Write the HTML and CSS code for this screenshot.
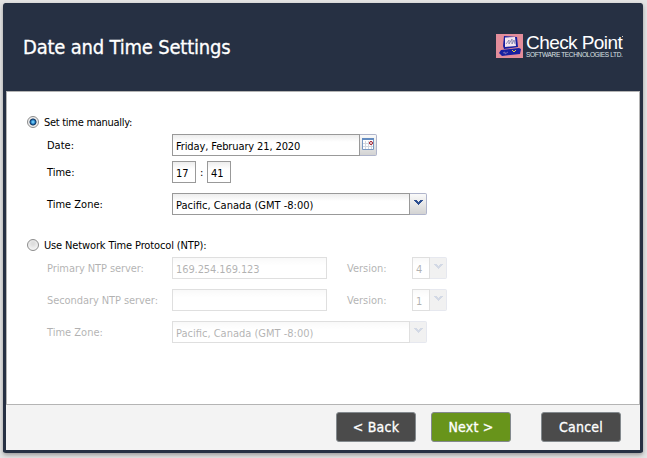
FILE: index.html
```html
<!DOCTYPE html>
<html lang="en">
<head>
<meta charset="utf-8">
<title>Date and Time Settings</title>
<link rel="stylesheet" href="styles.css">
</head>
<body>
<svg width="0" height="0" class="defs">
  <symbol id="arrow" viewBox="0 0 9 6"><path d="M0 0h3v1h1v1h1V1h1V0h3v1H8v1H7v1H6v1H5v1H4V4H3V3H2V2H1V1H0z"/></symbol>
</svg>
<div class="window">
  <header class="header">
    <h1>Date and Time Settings</h1>
    <div class="brand">
      <svg class="logo" viewBox="0 0 27 24">
        <path fill="#e38d9b" d="M0 0h27v24H0z"/>
        <path fill="#1720a0" d="M8 2l13 1 1 10-14 2-1-3z"/>
        <path fill="#f4e5ef" d="M9 3.5l10-.5 1 9-11 1z"/>
        <path fill="none" stroke="#7376a8" stroke-width=".8" d="M10 10l3-4v4l3-5v5l2-4 1 4"/>
        <path fill="#1720a0" d="M5 16l18-2 2 1-1 5-18 2-3-3z"/>
        <path fill="none" stroke="#8d78b8" stroke-width=".8" d="M7 19l2-1v2l3-2"/>
        <path fill="none" stroke="#e5ce42" d="M16 16l2 2 2-2"/>
      </svg>
      <div class="wordmark">
        <div class="name">Check Point<span class="mark"></span></div>
        <div class="tagline">SOFTWARE TECHNOLOGIES LTD.</div>
      </div>
    </div>
  </header>
  <main class="content">
    <div class="row choice"><span class="radio on"></span><span class="t-set">Set time manually:</span></div>
    <div class="row date"><label>Date:</label><div class="input w-date t-date">Friday, February 21, 2020</div><div class="trigger">
      <svg class="calendar" viewBox="0 0 13 13"><path fill="#fff" stroke="#7898c2" d="M.5 1.5h11v10H.5z"/><path fill="#638bc0" d="M0 0h12v2H0z"/><path stroke="#d2d7df" d="M3.5 3v8M6.5 3v8M9.5 3v8M1 5.5h10M1 8.5h10"/><circle cx="9" cy="5" r="1.5" fill="#fff" stroke="#a01421"/></svg></div></div>
    <div class="row time"><label>Time:</label><div class="input w-time">17</div><span class="colon">:</span><div class="input w-time">41</div></div>
    <div class="row zone"><label>Time Zone:</label><div class="input w-zone">Pacific, Canada (GMT -8:00)</div><div class="trigger"><svg class="arrow"><use href="#arrow"/></svg></div></div>
    <div class="row choice second"><span class="radio"></span><span class="t-use">Use Network Time Protocol (NTP):</span></div>
    <div class="disabled">
      <div class="row"><label class="t-server">Primary NTP server:</label><div class="input w-server t-ip">169.254.169.123</div><span class="version">Version:</span><div class="input w-ver">4</div><div class="trigger"><svg class="arrow"><use href="#arrow"/></svg></div></div>
      <div class="row"><label class="t-server">Secondary NTP server:</label><div class="input w-server"></div><span class="version">Version:</span><div class="input w-ver">1</div><div class="trigger"><svg class="arrow"><use href="#arrow"/></svg></div></div>
      <div class="row"><label>Time Zone:</label><div class="input w-zone">Pacific, Canada (GMT -8:00)</div><div class="trigger"><svg class="arrow"><use href="#arrow"/></svg></div></div>
    </div>
  </main>
  <footer class="footer">
    <button>&lt; Back</button>
    <button class="next">Next &gt;</button>
    <button class="cancel">Cancel</button>
  </footer>
</div>
</body>
</html>
```
FILE: styles.css
```css
* { box-sizing: border-box; }
body {
  margin: 0;
  height: 458px;
  overflow: hidden;
  padding: 3px 4px 5px 3px;
  background: #e4e4e4;
  font-family: "DejaVu Sans Condensed", "DejaVu Sans", sans-serif;
  font-stretch: condensed;
  font-size: 11px;
  color: #000;
}
.defs { position: absolute; }
.window {
  height: 450px;
  border: 3px solid #263043;
  border-top: 0;
  border-radius: 3px;
  background: #263043;
  box-shadow: 0 2px 4px #999;
}
.header {
  height: 88px;
  padding: 0 17px;
  display: flex;
  justify-content: space-between;
  align-items: center;
}
h1 {
  margin: 0;
  color: #fff;
  font-size: 20px;
  font-weight: 400;
  letter-spacing: -0.2px;
  -webkit-text-stroke: .3px #fff;
}
.brand { display: flex; gap: 3px; height: 24px; margin-top: -3px; }
.logo { width: 27px; height: 24px; }
.wordmark { width: 97px; color: #fff; font-family: "Liberation Sans", Arial, sans-serif; white-space: nowrap; }
.name { height: 17px; font-size: 19px; line-height: 17px; letter-spacing: -0.57px; }
.mark { display: inline-block; width: 1px; height: 1px; background: #ccc; vertical-align: 12px; }
.tagline { height: 7px; font-size: 6.5px; line-height: 8px; letter-spacing: -0.34px; color: #dde0e5; }
.content {
  height: 314px;
  padding: 20px 0 0 20px;
  background: #fff;
  border: 1px solid #b4b4b4;
}
.row { display: flex; align-items: center; height: 22px; white-space: nowrap; }
.row.choice { height: 20px; gap: 5px; }
.radio {
  width: 12px;
  height: 12px;
  border: 1px solid #8c8c8c;
  border-radius: 50%;
  background: radial-gradient(circle at 50% 35%, #ddd 15%, #f5f5f5 75%);
}
.radio.on { background: radial-gradient(circle, #65c4f4 0 1px, #1766ad 2.2px, #173557 3.1px, #eee 3.9px); }
.t-set { letter-spacing: -0.28px; }
.t-date { letter-spacing: -0.12px; }
.t-use { letter-spacing: -0.14px; }
.t-server { letter-spacing: -0.08px; }
.t-ip { letter-spacing: -0.1px; }
label { width: 145px; padding: 1px 0 0 20px; }
.input {
  height: 22px;
  padding: 2px 0 0 3px;
  border: 1px solid #999;
  background: linear-gradient(#ededed, #fff 7px);
  line-height: 19px;
}
.w-date { width: 188px; }
.w-time { width: 24px; }
.w-zone { width: 238px; }
.w-server { width: 155px; }
.w-ver { width: 18px; }
.trigger {
  width: 17px;
  height: 22px;
  display: flex;
  align-items: center;
  justify-content: center;
  border: 1px solid #b0b5cb;
  border-left: 0;
  border-radius: 0 2px 2px 0;
  background: linear-gradient(#fafafa, #e5e5e5 55%, #d3d3d3);
}
.calendar { width: 13px; height: 13px; margin-top: -2px; }
.arrow { width: 9px; height: 6px; fill: #2d4f91; margin-top: -2px; }
.date { margin-top: 2px; }
.time { margin-top: 5px; }
.colon { width: 11px; padding-left: 4px; }
.zone { margin-top: 10px; }
.row.second { margin-top: 20px; }
.disabled { display: flex; flex-direction: column; gap: 10px; margin-top: 2px; opacity: .3; }
.disabled .arrow { opacity: .6; }
.disabled .trigger { background: #d4d4d4; }
.version { width: 85px; padding: 1px 0 0 20px; }
.footer {
  height: 45px;
  padding: 7px 19px 0 0;
  display: flex;
  justify-content: flex-end;
  gap: 15px;
  background: #f3f3f3;
}
button {
  width: 80px;
  height: 30px;
  padding: 0 0 1px;
  border: 1px solid #83898d;
  border-radius: 3px;
  background: #4b4b4b;
  color: #fff;
  font: 14px "DejaVu Sans Condensed", "DejaVu Sans", sans-serif;
  letter-spacing: .2px;
  -webkit-text-stroke: .3px #fff;
}
.next { background: #68941b; }
.cancel { margin-left: 15px; }
```
